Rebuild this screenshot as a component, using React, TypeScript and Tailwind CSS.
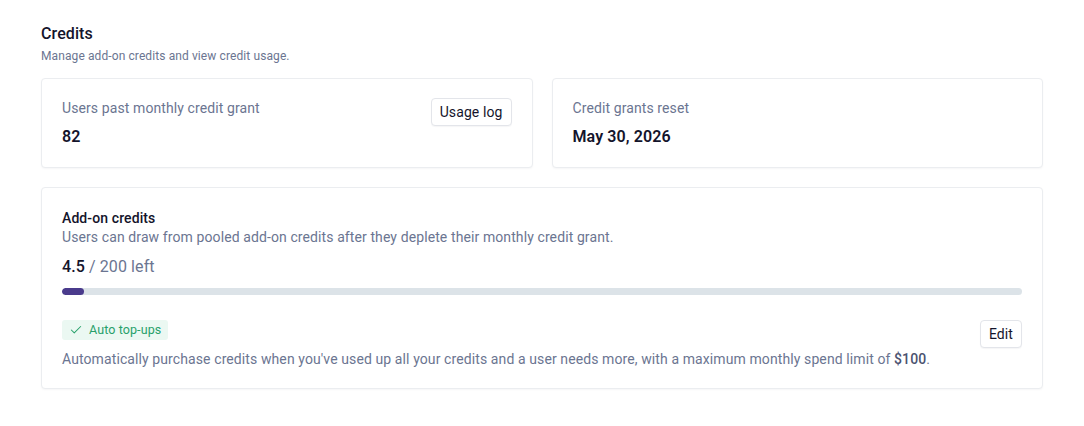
import { Check } from "lucide-react";

function StatCard({
  label,
  value,
  action,
}: {
  label: string;
  value: string;
  action?: React.ReactNode;
}) {
  return (
    <section className="flex items-start justify-between rounded-[4px] border border-[#ebedf0] bg-white px-5 pb-[19px] pt-[19px] shadow-[0_1px_2px_rgba(16,24,40,0.04)]">
      <div className="flex flex-col">
        <p className="text-[14px] leading-[20px] text-[#6b7591]">{label}</p>
        <p className="mt-[8px] text-[16px] font-semibold leading-[22px] text-[#14142b]">
          {value}
        </p>
      </div>
      {action}
    </section>
  );
}

function OutlineButton({ children }: { children: React.ReactNode }) {
  return (
    <button
      type="button"
      className="rounded-[4px] border border-[#e3e5ea] bg-white px-[8px] py-[4px] text-[14px] leading-[18px] text-[#14142b] shadow-[0_1px_1px_rgba(16,24,40,0.04)]"
    >
      {children}
    </button>
  );
}

export default function App() {
  const used = 4.5;
  const total = 200;
  const pct = Math.max((used / total) * 100, 2.2);

  return (
    <div
      className="min-h-[426px] bg-white px-[41px] pt-[25px] tracking-[0.1px] text-[#14142b]"
      style={{ fontFamily: "Roboto, 'Noto Sans', sans-serif" }}
    >
      <header className="flex flex-col">
        <h2 className="text-[16px] font-medium leading-[18px]">Credits</h2>
        <p className="mt-[6px] text-[12px] leading-[14px] text-[#6b7591]">
          Manage add-on credits and view credit usage.
        </p>
      </header>

      <div className="mt-[15px] grid grid-cols-2 gap-[19px]">
        <StatCard
          label="Users past monthly credit grant"
          value="82"
          action={<OutlineButton>Usage log</OutlineButton>}
        />
        <StatCard label="Credit grants reset" value="May 30, 2026" />
      </div>

      <section className="mt-[19px] rounded-[4px] border border-[#ebedf0] bg-white px-5 pb-[19px] pt-[21px] shadow-[0_1px_2px_rgba(16,24,40,0.04)]">
        <h3 className="text-[14px] font-medium leading-[18px]">Add-on credits</h3>
        <p className="text-[14px] leading-[20px] text-[#6b7591]">
          Users can draw from pooled add-on credits after they deplete their monthly
          credit grant.
        </p>
        <p className="mt-[9px] text-[16px] leading-[22px] text-[#6b7591]">
          <span className="font-medium text-[#14142b]">4.5</span> / 200 left
        </p>
        <div className="mt-[10px] h-[7px] w-full overflow-hidden rounded-full bg-[#dce3e8]">
          <div className="h-full rounded-full bg-[#4a3b8c]" style={{ width: `${pct}%` }} />
        </div>

        <div className="mt-[25px] flex items-start justify-between gap-4">
          <span className="inline-flex items-center gap-[6px] rounded-[3px] bg-[#ebf8f2] px-[7px] py-[2px] text-[12.5px] leading-[16px] text-[#27a06a]">
            <Check size={14} strokeWidth={1.75} />
            Auto top-ups
          </span>
          <OutlineButton>Edit</OutlineButton>
        </div>
        <p className="mt-[1px] text-[14px] leading-[20px] text-[#6b7591]">
          Automatically purchase credits when you've used up all your credits and a user
          needs more, with a maximum monthly spend limit of{" "}
          <span className="font-medium text-[#4b5270]">$100</span>.
        </p>
      </section>
    </div>
  );
}
